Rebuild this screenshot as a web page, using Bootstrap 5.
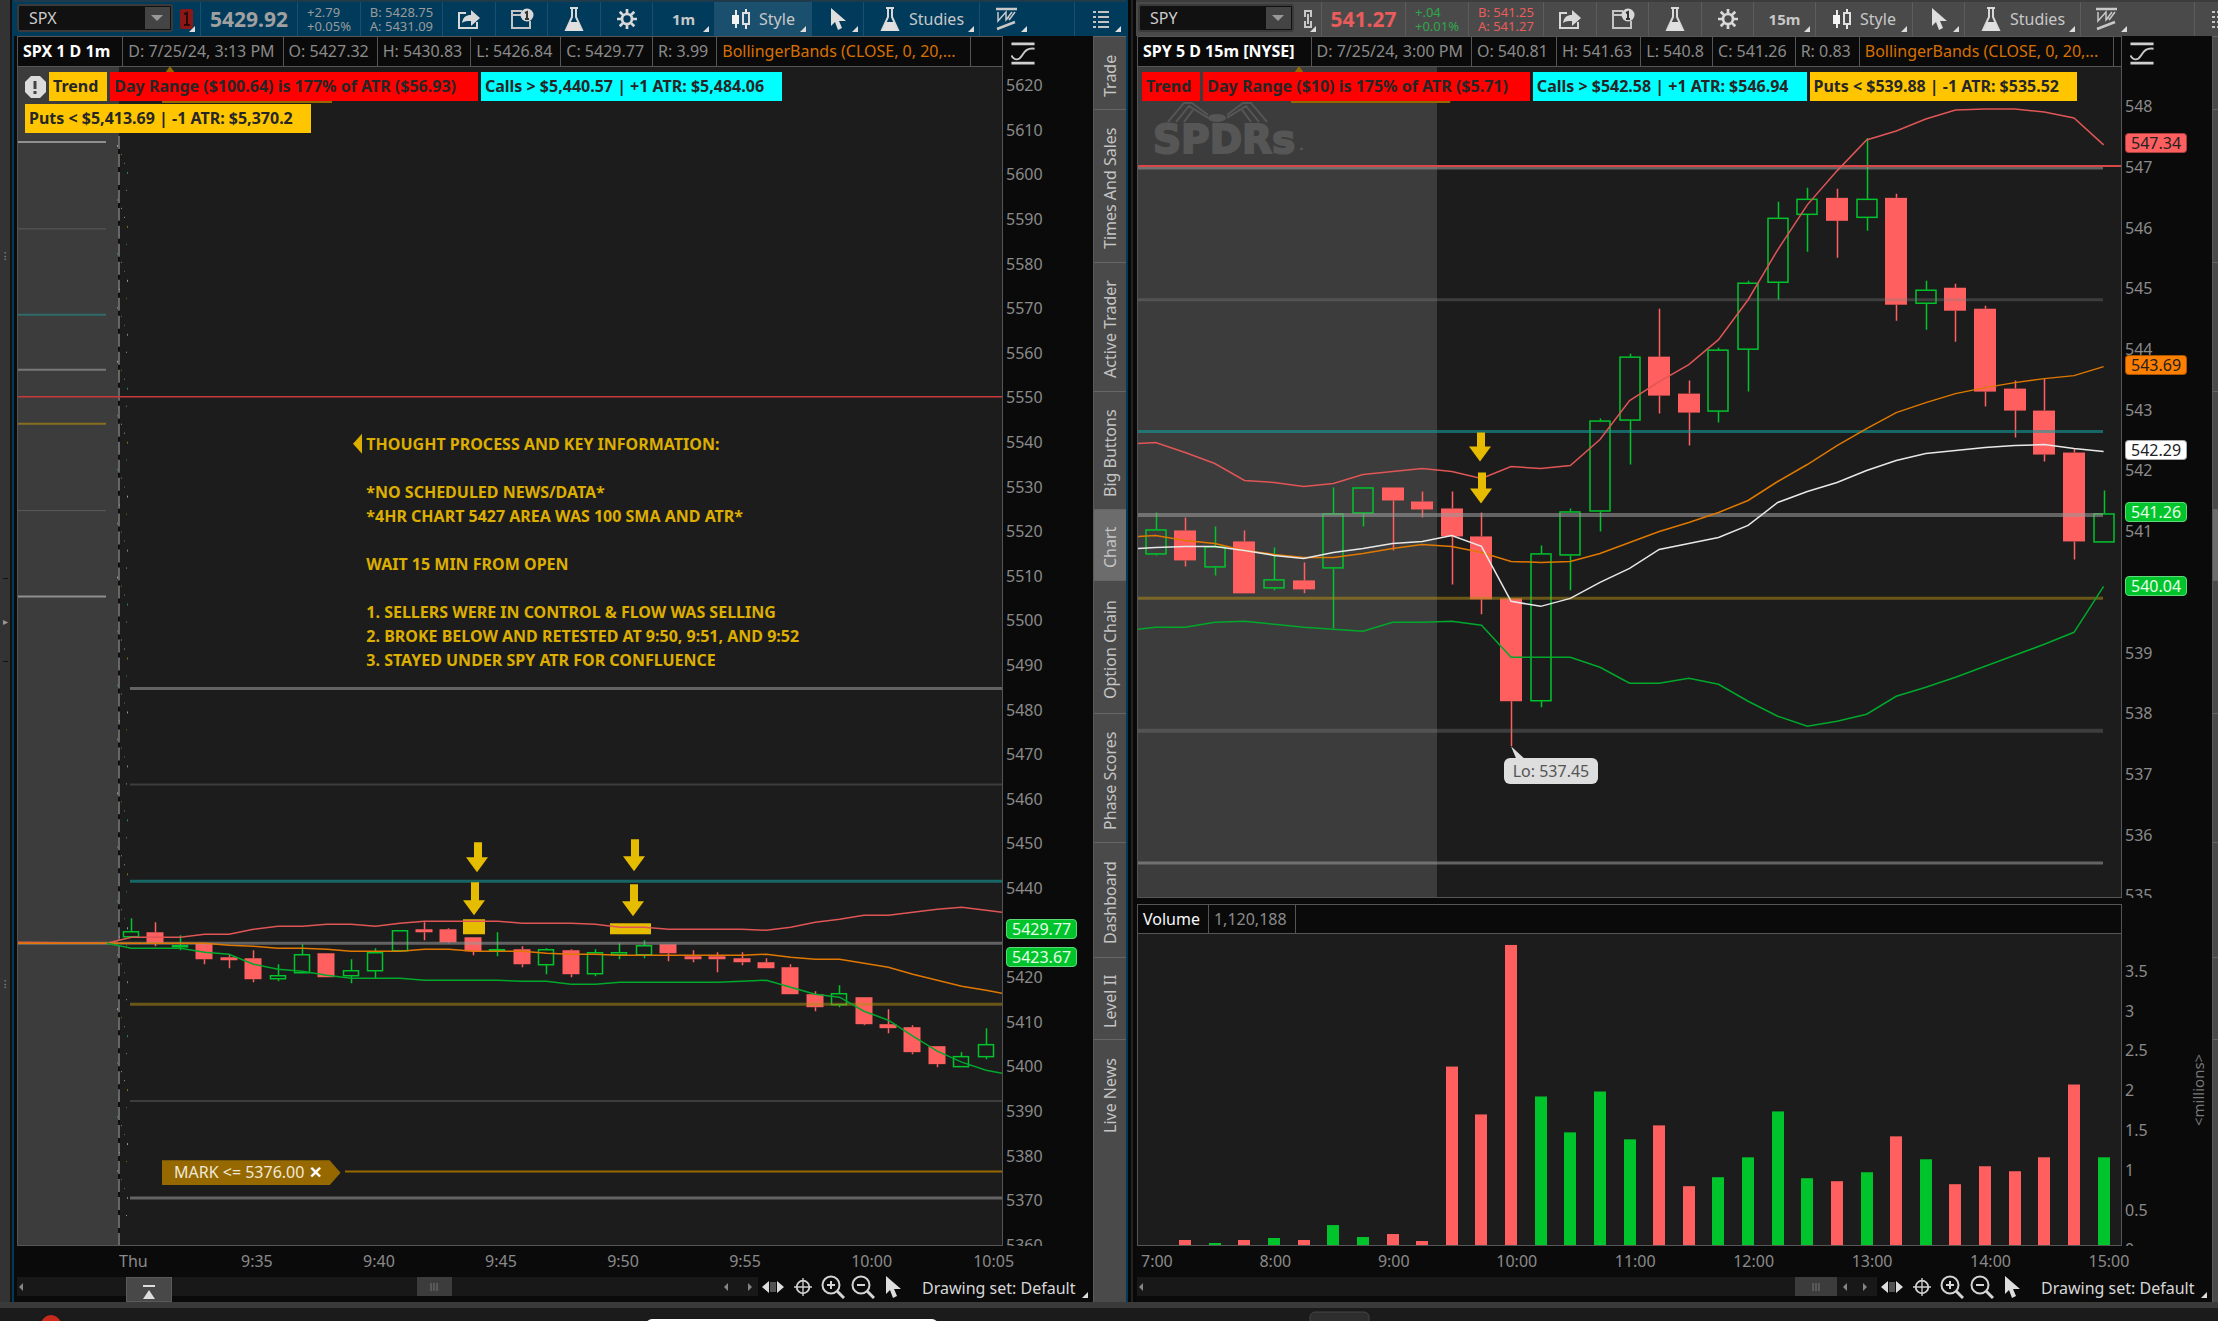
<!DOCTYPE html>
<html lang="en">
<head>
<meta charset="utf-8">
<meta name="viewport" content="width=device-width, initial-scale=1">
<title>Charts: SPX and SPY</title>
<link href="https://cdn.jsdelivr.net/npm/bootstrap@5.3.0/dist/css/bootstrap.min.css" rel="stylesheet">
<style>
:root{--line:#555;--ink:#8a8a8a;--plot:#1c1c1c;--deep:#0a0a0a}
body{font-family:"Noto Sans","Open Sans",sans-serif;font-size:16px;line-height:24px;background:#0a0a0a;color:var(--ink);overflow:hidden}
button{font:inherit;color:inherit;background:none;border:0;padding:0}
.edge{width:12px;background:#333;border-right:2px solid #111;color:#999;font-size:10px;padding-top:18.8vh;padding-bottom:23.5vh}
.edge span{height:16px;line-height:16px}
.edge .grip{border-top:1px solid #111;border-bottom:1px solid #111;height:84px;line-height:84px}
.pane-a{width:calc(50% + 7px);border-left:2px solid #003b5c;border-right:2px solid #003b5c}
.divide{width:8px;background:#222;border-left:3px solid #080808;border-right:3px solid #080808}
.bar{height:36px;background:#003b5c;color:#c8c8c8;border-top:2px solid #1f3a4a;padding-left:3px}
.pane-b .bar{background:#4a4a4a;border-top-color:#3c3c3c;padding-left:2px}
.cell{border-left:1px solid #1c4f6e;height:34px;position:relative;flex:none;display:flex;align-items:center;justify-content:center}
.pane-b .cell{border-left-color:#5c5c5c}
.cell svg{display:block}
.more::after{content:"";position:absolute;right:5px;bottom:4px;border:3px solid transparent;border-right-color:#ddd;border-bottom-color:#ddd}
.lit{background:#1a4f6e}
.combo{width:156px;height:28px;margin-top:2px;background:#111;border:2px solid #3a3a3a;border-radius:3px;position:relative}
.combo select{appearance:none;background:none;border:0;color:#ccc;width:100%;height:100%;padding:0 10px;position:relative;z-index:1}
.combo svg{position:absolute;right:0;top:0}
.pane-b .cell.w-link,.cell.w-link{width:27px;border-left:0}.w-52{width:52px}.w-53{width:53px}.w-62{width:62px}.w-chg{width:63px}.w-bid{width:82px}.w-style{width:97px}.w-stud{width:116px}.w-last{width:97px}
.pane-b .w-bid{width:75px}.pane-b .w-last{width:84px}
.last{font-size:21px;font-weight:700;color:#a0a0a0}
.tiny{font-size:13px;line-height:14px;text-align:left;color:#9a9a9a}
.last.dn,.tiny.dn{color:#e85c5c}.tiny.up{color:#2fa84a}
.period{font-size:15px;font-weight:700}
.board{flex:1 1 0;min-width:0;display:grid;grid-template-columns:1fr 90px;background:var(--deep)}
.board-a{grid-template-rows:31px minmax(0,1fr) 31px 25px;padding-left:3px}
.board-b{grid-template-rows:31px minmax(0,831fr) 6px 30px minmax(0,312fr) 31px 25px;padding-left:1px}
.wide{grid-column:1/3}
.info{border:1px solid var(--line);display:flex;overflow:hidden;white-space:nowrap;line-height:28px}
.info>span{border-right:1px solid var(--line);padding:0 8px 0 5px}
.info .ttl{color:#fff;font-weight:700;padding-right:12px}
.info .bb{color:#d87000;width:254px}
.pane-b .info .ttl{padding-right:16px}
.plot{position:relative;background:var(--plot);border-right:1px solid var(--line);border-bottom:1px solid var(--line);border-left:1px solid var(--line);overflow:hidden}
.plot>svg{position:absolute;inset:0;width:100%;height:100%}
.flags{position:relative;display:flex;flex-wrap:wrap;gap:3px;padding:5px 7px;font-weight:700;color:#262626;line-height:29px}
.flag{padding:0 18px 0 4px}
.flag.f-r{padding-right:22px}
.flag.short{padding-right:9px}
.f-y{background:#ffc600}.f-r{background:#f00}.f-c{background:#0ff}
.pane-b .flags{padding-left:4px}
.ladder{overflow:hidden;position:relative}
.ladder>span{display:flex;align-items:center;padding-left:3px}
.lad-a>span{height:3.783%}.lad-a>span:first-of-type{margin-top:-4px}
.lad-b>span{height:7.304%}.lad-b>span:first-of-type{margin-top:9px}
.lad-v{grid-row:4/6;grid-column:2}
.lad-v>span{height:11.64%}.lad-v>span:first-of-type{margin-top:47px}
.pill{position:absolute;left:3px;height:20px;line-height:18px;border-radius:4px;padding:0 5px;border:1px solid #0005;color:#222}
.pill.g{background:#00c42c;color:#e8ffe8;border-color:#5fd878}
.unit{position:absolute;right:2px;top:15px;height:100%;writing-mode:vertical-rl;transform:rotate(180deg);text-align:center;color:#777;font-size:15px}
.times{display:flex;line-height:30px}
.times span{flex:0 0 12.53%}
.board-a .times{padding-left:102px}
.board-b .times{padding-left:4px}
.board-b .times span{flex-basis:11.06%}
.track{height:19px;background:#181818;flex:1 1 0;color:#777}
.thumb{width:35px;height:19px;background:#3c3c3c}
.board-a .thumb{margin-left:33%}
.pane-b .thumb{width:42px}
.tools{width:335px;height:25px;color:#d8d8d8;position:relative}
.tools button{width:30px;height:20px;display:flex;justify-content:center;align-items:center}
.tools .set{width:auto;margin-left:14px;white-space:nowrap;padding-top:2px}
.pop{width:46px;height:25px;margin-left:101px;background:#484848;border:1px solid #5a5a5a}
.rail{width:33px;background:#4a4a4a;border-left:1px solid #5a5a5a;color:#c4c4c4;overflow:hidden}
.rail button{writing-mode:vertical-rl;transform:rotate(180deg);width:32px;border-bottom:1px solid #666;flex:none;line-height:30px;padding-bottom:5px}
.rail .on{background:#6c6c6c}
.pane-b .rail{flex:0 0 6px}
.foot{height:19px;background:#1b1b1b;border-top:6px solid #3a3a3a;position:relative;overflow:hidden}
.note{position:absolute;left:35.4%;top:31%;font-weight:700;color:#dcae00;white-space:pre;line-height:24px}
.mark-tag{position:absolute;left:144px;top:92.8%;height:25px;line-height:24px;padding:0 19px 0 12px;background:#966900;color:#f0e8d8;clip-path:polygon(0 0,calc(100% - 11px) 0,100% 50%,calc(100% - 11px) 100%,0 100%);white-space:nowrap}
.mark-tag button{font-weight:700;color:#fff}
.low{position:absolute;left:37.2%;top:83.2%;background:#dedede;color:#555;border-radius:6px;height:26px;line-height:26px;padding:0 9px}
</style>
<script src="https://cdn.jsdelivr.net/npm/bootstrap@5.3.0/dist/js/bootstrap.bundle.min.js"></script>
</head>
<body class="vh-100 d-flex flex-column">
<svg width="0" height="0" class="position-absolute" aria-hidden="true">
 <defs>
 <symbol id="share" viewBox="0 0 24 22"><path d="M9 5H2v15h18v-6" fill="none" stroke="#d8d8d8" stroke-width="2"/><path d="M5 15c1-6 4-8 9-8V2l9 8-9 8v-5c-4 0-6 0-9 2z" fill="#d8d8d8"/></symbol>
 <symbol id="alert" viewBox="0 0 24 22"><path d="M12 3H2v17h18v-7M2 7h9" fill="none" stroke="#c4c4c4" stroke-width="2"/><circle cx="17" cy="7" r="6.500" fill="#d8d8d8"/><path d="M15 5l2-1v7m-2 0h4" stroke="#333" stroke-width="2" fill="none"/></symbol>
 <symbol id="flask" viewBox="0 0 22 28"><path d="M7 3h8M9 3v9L3 25h16L13 12V3" fill="none" stroke="#d8d8d8" stroke-width="2"/><path d="M7 17h8l4 9H3z" fill="#e0e0e0"/></symbol>
 <symbol id="gear" viewBox="0 0 22 22"><circle cx="11" cy="11" r="5.500" fill="none" stroke="#d8d8d8" stroke-width="3"/><path d="M11 0v5M11 17v5M0 11h5M17 11h5M3 3l4 4M15 15l4 4M19 3l-4 4M7 15l-4 4" stroke="#d8d8d8" stroke-width="3"/></symbol>
 <symbol id="candles" viewBox="0 0 20 22"><path d="M5 2v18M15 1v4m0 12v4" stroke="#e8e8e8" stroke-width="2"/><path d="M1 7h7v9H1z" fill="#f4f4f4"/><path d="M12 5h6v11h-6z" fill="none" stroke="#e0e0e0" stroke-width="2"/></symbol>
 <symbol id="cursor" viewBox="0 0 18 22"><path d="M2 0v18l4-4 3 8 4-2-3-7h7z" fill="#dedede"/></symbol>
 <symbol id="pattern" viewBox="0 0 21 24"><path d="M0 2h21M1 22l18-7" stroke="#c8c8c8" stroke-width="2.500"/><path d="M2 5v9l8-9v8l3-3M13 13l6-8M10 13l6-8" fill="none" stroke="#c8c8c8" stroke-width="1.500"/></symbol>
 <symbol id="list" viewBox="0 0 18 18"><path d="M1 2h3m2 0h11M1 7h3m2 0h11M1 12h3m2 0h11M1 17h3m2 0h11" stroke="#c4c4c4" stroke-width="2"/></symbol>
 <symbol id="drop" viewBox="0 0 26 24"><path d="M0 1h25v22H0z" fill="#444"/><path d="M6 9h12l-6 6z" fill="#999"/></symbol>
 <symbol id="chain" viewBox="0 0 10 20"><path d="M2 8V2h6v6M2 12v6h6v-6M5 5v10" fill="none" stroke="#c8c8c8" stroke-width="2"/></symbol>
 <symbol id="fit" viewBox="0 0 24 26"><path d="M0 3h24M0 23h24" stroke="#d0d0d0" stroke-width="3"/><path d="M0 15c3 6 8 5 11 0s6-8 13-7" fill="none" stroke="#c8c8c8" stroke-width="2"/></symbol>
 <symbol id="spread" viewBox="0 0 22 14"><path d="M0 7l7-6v12zM22 7l-7-6v12z" fill="#ddd"/><path d="M9 2v10M11 2v10M13 2v10" stroke="#999"/></symbol>
 <symbol id="target" viewBox="0 0 20 20"><circle cx="10" cy="10" r="7" fill="none" stroke="#d0d0d0" stroke-width="2"/><path d="M10 0v20M0 10h20" stroke="#d0d0d0" stroke-width="1.500"/></symbol>
 <symbol id="plus" viewBox="0 0 24 24"><circle cx="10" cy="10" r="8.500" fill="none" stroke="#d4d4d4" stroke-width="2"/><path d="M16 16l7 7" stroke="#d4d4d4" stroke-width="3"/><path d="M10 6v8M6 10h8" stroke="#d4d4d4" stroke-width="2"/></symbol>
 <symbol id="minus" viewBox="0 0 24 24"><circle cx="10" cy="10" r="8.500" fill="none" stroke="#d4d4d4" stroke-width="2"/><path d="M16 16l7 7" stroke="#d4d4d4" stroke-width="3"/><path d="M6 10h8" stroke="#d4d4d4" stroke-width="2"/></symbol>
 <symbol id="tl" viewBox="0 0 8 10"><path d="M6 1v8L2 5z" fill="#858585"/></symbol>
 <symbol id="tr" viewBox="0 0 8 10"><path d="M2 1v8l4-4z" fill="#858585"/></symbol>
 <symbol id="ribs" viewBox="0 0 10 10"><path d="M2 1v8M5 1v8M8 1v8" stroke="#777"/></symbol>
 </defs>
</svg>

<div class="d-flex flex-grow-1" style="min-height:0">
 <aside class="edge d-flex flex-column align-items-center justify-content-between flex-shrink-0 text-center">
  <span>⁝</span><span class="grip">▸</span><span>⁝</span>
 </aside>

 <section class="pane-a d-flex flex-column flex-shrink-0">
  <header class="bar d-flex">
   <div class="combo flex-shrink-0"><select aria-label="Symbol SPX"><option>SPX</option></select><svg width="26" height="24"><use href="#drop"/></svg></div>
   <button class="cell w-link more" aria-label="Link 1"><svg width="13" height="20"><rect width="13" height="20" rx="2" fill="#8c1717"/><path d="M4 5l3-1v12M4 16h6" fill="none" stroke="#2a0a0a" stroke-width="2"/></svg></button>
   <span class="cell w-last last">5429.92</span>
   <span class="cell w-chg tiny">+2.79<br>+0.05%</span>
   <span class="cell w-bid tiny">B: 5428.75<br>A: 5431.09</span>
   <button class="cell w-53" aria-label="Share"><svg width="24" height="22"><use href="#share"/></svg></button>
   <button class="cell w-52" aria-label="Alert"><svg width="24" height="22"><use href="#alert"/></svg></button>
   <button class="cell w-53" aria-label="Lab"><svg width="22" height="28"><use href="#flask"/></svg></button>
   <button class="cell w-52" aria-label="Settings"><svg width="20" height="20"><use href="#gear"/></svg></button>
   <button class="cell w-62 period more">1m</button>
   <button class="cell w-style lit more"><svg width="20" height="22" class="me-2"><use href="#candles"/></svg>Style</button>
   <button class="cell w-52 more" aria-label="Cursor"><svg width="18" height="22"><use href="#cursor"/></svg></button>
   <button class="cell w-stud more"><svg width="22" height="28" class="me-2"><use href="#flask"/></svg>Studies</button>
   <button class="cell w-53 more" aria-label="Patterns"><svg width="21" height="24"><use href="#pattern"/></svg></button>
   <button class="cell w-52 more ms-auto" aria-label="Menu"><svg width="18" height="18"><use href="#list"/></svg></button>
  </header>
  <div class="d-flex flex-grow-1" style="min-height:0">
   <div class="board board-a">
    <div class="info"><span class="ttl">SPX 1 D 1m</span><span>D: 7/25/24, 3:13 PM</span><span>O: 5427.32</span><span>H: 5430.83</span><span>L: 5426.84</span><span>C: 5429.77</span><span>R: 3.99</span><span class="bb">BollingerBands (CLOSE, 0, 20,...</span></div>
    <div class="ps-2 pt-1"><svg width="24" height="25"><use href="#fit"/></svg></div>
    <div class="plot">
     <svg id="chartA" viewBox="18 67 984 1179" preserveAspectRatio="none"></svg>
     <div class="flags"><svg width="21" height="24" class="mt-1"><path d="M6 0h9l6 6v10l-6 6H6l-6-6V6z" fill="#dcdcdc"/><path d="M10 5v8m0 2v3" stroke="#444" stroke-width="3"/></svg><span class="flag short f-y">Trend</span><span class="flag f-r">Day Range ($100.64) is 177% of ATR ($56.93)</span><span class="flag f-c">Calls &gt; $5,440.57 | +1 ATR: $5,484.06</span><span class="flag f-y">Puts &lt; $5,413.69 | -1 ATR: $5,370.2</span></div>
     <div class="note">THOUGHT PROCESS AND KEY INFORMATION:

*NO SCHEDULED NEWS/DATA*
*4HR CHART 5427 AREA WAS 100 SMA AND ATR*

WAIT 15 MIN FROM OPEN

1. SELLERS WERE IN CONTROL &amp; FLOW WAS SELLING
2. BROKE BELOW AND RETESTED AT 9:50, 9:51, AND 9:52
3. STAYED UNDER SPY ATR FOR CONFLUENCE</div>
     <div class="mark-tag">MARK &lt;= 5376.00 <button aria-label="Remove">✕</button></div>
    </div>
    <div class="ladder lad-a" id="ladA"></div>
    <div class="times wide"><span>Thu</span><span>9:35</span><span>9:40</span><span>9:45</span><span>9:50</span><span>9:55</span><span>10:00</span><span>10:05</span></div>
    <div class="wide d-flex">
     <div class="track d-flex align-items-center"><svg width="8" height="10"><use href="#tl"/></svg><button class="pop align-self-start" aria-label="Expand"><svg width="14" height="18"><path d="M1 2h12v2H1zM7 7l6 9H1z" fill="#ddd"/></svg></button><div class="thumb d-flex justify-content-center align-items-center me-auto"><svg width="10" height="10"><use href="#ribs"/></svg></div><svg width="8" height="10" class="me-3"><use href="#tl"/></svg><svg width="8" height="10" class="me-1"><use href="#tr"/></svg></div>
     <div class="tools d-flex more"><button aria-label="Fit"><svg width="22" height="14"><use href="#spread"/></svg></button><button aria-label="Crosshair"><svg width="18" height="20"><use href="#target"/></svg></button><button aria-label="Zoom in"><svg width="24" height="24"><use href="#plus"/></svg></button><button aria-label="Zoom out"><svg width="24" height="24"><use href="#minus"/></svg></button><button aria-label="Pointer"><svg width="18" height="22"><use href="#cursor"/></svg></button><button class="set">Drawing set: Default</button></div>
    </div>
   </div>
   <nav class="rail d-flex flex-column flex-shrink-0"></nav>
  </div>
 </section>

 <div class="divide flex-shrink-0"></div>

 <section class="pane-b d-flex flex-column flex-grow-1 overflow-hidden">
  <header class="bar d-flex">
   <div class="combo flex-shrink-0"><select aria-label="Symbol SPY"><option>SPY</option></select><svg width="26" height="24"><use href="#drop"/></svg></div>
   <button class="cell w-link more" aria-label="Link"><svg width="10" height="20"><use href="#chain"/></svg></button>
   <span class="cell w-last last dn">541.27</span>
   <span class="cell w-chg tiny up">+.04<br>+0.01%</span>
   <span class="cell w-bid tiny dn">B: 541.25<br>A: 541.27</span>
   <button class="cell w-53" aria-label="Share"><svg width="24" height="22"><use href="#share"/></svg></button>
   <button class="cell w-52" aria-label="Alert"><svg width="24" height="22"><use href="#alert"/></svg></button>
   <button class="cell w-53" aria-label="Lab"><svg width="22" height="28"><use href="#flask"/></svg></button>
   <button class="cell w-52" aria-label="Settings"><svg width="20" height="20"><use href="#gear"/></svg></button>
   <button class="cell w-62 period more">15m</button>
   <button class="cell w-style more"><svg width="20" height="22" class="me-2"><use href="#candles"/></svg>Style</button>
   <button class="cell w-52 more" aria-label="Cursor"><svg width="18" height="22"><use href="#cursor"/></svg></button>
   <button class="cell w-stud more"><svg width="22" height="28" class="me-2"><use href="#flask"/></svg>Studies</button>
   <button class="cell w-52 more" aria-label="Patterns"><svg width="21" height="24"><use href="#pattern"/></svg></button>
   <button class="cell ms-auto overflow-hidden justify-content-start ps-3" style="width:24px" aria-label="Menu"><svg width="18" height="18" class="flex-shrink-0"><use href="#list"/></svg></button>
  </header>
  <div class="d-flex flex-grow-1" style="min-height:0">
   <div class="board board-b">
    <div class="info"><span class="ttl">SPY 5 D 15m [NYSE]</span><span>D: 7/25/24, 3:00 PM</span><span>O: 540.81</span><span>H: 541.63</span><span>L: 540.8</span><span>C: 541.26</span><span>R: 0.83</span><span class="bb">BollingerBands (CLOSE, 0, 20,...</span></div>
    <div class="ps-2 pt-1"><svg width="24" height="25"><use href="#fit"/></svg></div>
    <div class="plot">
     <svg id="chartB" viewBox="1138 67 983 831" preserveAspectRatio="none"></svg>
     <div class="flags"><span class="flag short f-r">Trend</span><span class="flag f-r">Day Range ($10) is 175% of ATR ($5.71)</span><span class="flag f-c">Calls &gt; $542.58 | +1 ATR: $546.94</span><span class="flag f-y">Puts &lt; $539.88 | -1 ATR: $535.52</span></div>
     <div class="low">Lo: 537.45</div>
    </div>
    <div class="ladder lad-b" id="ladB"></div>
    <div class="wide"></div>
    <div class="info"><span class="text-light">Volume</span><span>1,120,188</span></div>
    <div class="ladder lad-v" id="ladV"></div>
    <div class="plot"><svg id="chartV" viewBox="1138 934 983 312" preserveAspectRatio="none"></svg></div>
    <div class="times wide"><span>7:00</span><span>8:00</span><span>9:00</span><span>10:00</span><span>11:00</span><span>12:00</span><span>13:00</span><span>14:00</span><span>15:00</span></div>
    <div class="wide d-flex">
     <div class="track d-flex align-items-center"><svg width="8" height="10"><use href="#tl"/></svg><div class="thumb d-flex justify-content-center align-items-center ms-auto me-1"><svg width="10" height="10"><use href="#ribs"/></svg></div><svg width="8" height="10" class="me-2"><use href="#tl"/></svg><svg width="8" height="10" class="ms-1 me-2"><use href="#tr"/></svg></div>
     <div class="tools d-flex more"><button aria-label="Fit"><svg width="22" height="14"><use href="#spread"/></svg></button><button aria-label="Crosshair"><svg width="18" height="20"><use href="#target"/></svg></button><button aria-label="Zoom in"><svg width="24" height="24"><use href="#plus"/></svg></button><button aria-label="Zoom out"><svg width="24" height="24"><use href="#minus"/></svg></button><button aria-label="Pointer"><svg width="18" height="22"><use href="#cursor"/></svg></button><button class="set">Drawing set: Default</button></div>
    </div>
   </div>
   <nav class="rail d-flex flex-column"></nav>
  </div>
 </section>
</div>
<footer class="foot flex-shrink-0">
 <svg width="100%" height="13" class="d-block"><circle cx="51" cy="17" r="10" fill="#c92a1c"/><rect x="646" y="11" width="292" height="20" rx="6" fill="#fff"/><rect x="1310" y="4" width="59" height="20" rx="5" fill="#2e2e2e" stroke="#444"/></svg>
</footer>

<script>
const RED='#ff5f5f',GRN='#00c42c';
const rect=(x,y,w,h,f,e='')=>`<rect x="${x}" y="${y}" width="${w}" height="${h}" fill="${f}" ${e}/>`;
const hline=(x1,x2,y,c,w)=>`<path d="M${x1} ${y}H${x2}" stroke="${c}" stroke-width="${w}"/>`;
// candle rows: colour, high, body top, body bottom, low
const candles=(rows,x0,dx,w)=>rows.map(([c,h,t,b,l],i)=>{
  const x=Math.round(x0+dx*i), s=c=='r'?RED:GRN;
  const wick=`<path d="M${x+.5} ${h}V${t}M${x+.5} ${b}V${l}" stroke="${s}" stroke-width="1.5"/>`;
  return wick+(c=='r'?rect(x-w/2,t,w,Math.max(b-t,3),s):rect(x-w/2+1,t+.5,w-2,Math.max(b-t-1,1),'none',`stroke="${s}" stroke-width="1.500"`));
}).join('');
const curve=(first,ys,x0,dx,c,last='')=>`<polyline fill="none" stroke="${c}" stroke-width="1.500" points="${first} ${ys.map((y,i)=>(x0+dx*i).toFixed(1)+','+y).join(' ')} ${last}"/>`;
const arrow=(x,y,tip)=>`<path d="M${x-4} ${y}h8V${tip-15}h6L${x-1} ${tip}L${x-12} ${tip-15}h8z" fill="#e6bc00"/>`;
const grayB='#9a9a9a90',grayS='#80808055';

const A=[['g',919,932,938,938],['r',923,933,944,947],['g',936,946,947,951],['r',944,944,960,965],['r',955,958,960,969],['r',951,959,980,983],['g',965,976,980,982],['g',945,955,974,974],['r',954,954,978,978],['g',960,971,977,984],['g',949,953,972,979],['g',931,931,952,952],['r',923,930,933,941],['r',929,930,943,944],['r',938,938,952,956],['g',933,950,952,957],['r',947,950,965,968],['g',949,950,966,975],['r',950,951,975,978],['g',950,953,975,977],['g',944,953,956,960],['g',941,946,956,959],['r',945,945,954,962],['r',951,957,960,963],['r',953,957,960,973],['r',953,959,963,966],['r',959,963,969,969],['r',965,968,995,995],['r',992,995,1008,1012],['g',986,994,1006,1008],['r',998,998,1025,1026],['r',1010,1025,1029,1034],['r',1026,1028,1053,1055],['r',1047,1047,1065,1068],['g',1053,1057,1068,1068],['g',1029,1045,1058,1060]];
const aUp=[938,938,938,935,935,930,927,927,925,925,927,924,922,922,922,922,924,924,924,925,928,928,930,930,930,930,931,928,923,920,916,916,913,910,908,911];
const aMid=[944,944,944,944,946,947,949,949,950,952,952,952,950,950,952,952,952,954,955,955,956,956,956,956,956,956,955,958,960,960,964,968,975,981,987,991];
const aLow=[949,949,949,953,955,965,970,972,976,979,979,979,981,981,981,981,982,982,985,985,983,983,983,983,983,982,981,988,995,998,1012,1021,1037,1052,1063,1071];
let dots='';
for(let i=0;i<120;i++){const y=145+i*9;const x=[117,121,124,127,119,126][i%6];dots+=rect(x,y,1,i%3?1:2,['#999','#666','#808080','#2c7c7c','#777','#8a6d10'][(i*5+(i>>2))%6]);}
document.getElementById('chartA').innerHTML=
 rect(17,67,102,1179,'#3c3c3c')+`<path d="M119 136V1246" stroke="#0f0f0f" stroke-width="2"/><path d="M119 136V1246" stroke="#666" stroke-width="2" stroke-dasharray="13 5"/>`+dots+
 '<path d="M165 73l5-7 5 7zM162 80h170v23H162z" fill="#966900"/>'+
 hline(17,106,142,'#909090',2)+hline(17,106,229,'#5a5a5a',1)+hline(17,106,315,'#2f6a6a',2)+hline(17,106,370,'#777',2)+hline(17,106,424,'#86701f',2)+hline(17,106,511,'#5a5a5a',1)+hline(17,106,597,'#909090',2)+
 candles(A,131,24.42,17)+
 rect(463,920,22,15,'#e6bc00')+rect(610,924,41,11,'#e6bc00')+
 hline(17,1002,397,'#c83a3a',1.5)+hline(130,1002,689,grayB,3)+hline(130,1002,785,grayS,2)+hline(130,1002,882,'#159a9a99',3)+hline(17,1002,944,grayB,3)+hline(130,1002,1005,'#b08c1488',3)+hline(130,1002,1102,grayS,2)+hline(345,1002,1172.5,'#966900',2)+hline(130,1002,1199,grayB,3)+
 curve('17,943 107,944',aUp,131.4,24.42,'#e05555','1002,913')+curve('17,944',aMid,131.4,24.42,'#e07800','1002,994')+curve('107,944',aLow,131.4,24.42,'#00a82c','1002,1074')+
 arrow(478,843,873)+arrow(475,883,916)+arrow(635,840,872)+arrow(634,885,917)+
 '<path d="M353 444l9-10v20z" fill="#dcae00"/>';

const B=[['g',513,530,555,556],['r',518,531,561,567],['g',527,547,568,576],['r',531,542,594,594],['g',548,580,589,591],['r',563,581,590,594],['g',488,514,569,629],['g',488,488,514,527],['r',488,488,501,551],['r',492,502,510,518],['r',492,509,537,585],['r',513,537,600,615],['r',599,599,702,747],['g',546,554,702,708],['g',509,512,556,591],['g',419,421,512,532],['g',354,357,421,465],['r',309,357,396,414],['r',381,394,413,446],['g',348,350,412,423],['g',281,283,350,392],['g',202,218,283,300],['g',188,199,215,252],['r',189,198,221,258],['g',138,199,218,231],['r',194,198,305,321],['g',281,290,304,330],['r',284,288,311,342],['r',306,309,392,407],['r',381,389,411,438],['r',379,411,455,462],['r',449,453,542,560],['g',491,514,543,543]];
const bUp=[443,453,464,481,483,487,484,475,472,469,472,479,467,469,466,440,401,382,365,340,300,250,205,171,140,131,119,110,109,109,112,118,145];
const bMid=[536,541,544,551,555,558,558,554,549,545,547,553,562,563,562,554,543,532,523,513,501,482,465,446,429,413,403,394,388,383,379,376,367];
const bWht=[548,547,547,551,556,559,553,549,544,542,536,547,602,607,599,583,569,550,544,538,526,503,492,483,471,461,454,451,448,446,445,449,452];
const bLow=[628,628,623,622,625,628,630,632,623,623,622,626,658,658,658,668,684,684,679,685,702,717,727,722,715,697,688,678,667,656,645,633,587];
document.getElementById('chartB').innerHTML=
 rect(1138,67,299,831,'#3c3c3c')+
 '<path d="M1294 73l5-7 5 7zM1291 80h165l-6 23h-159z" fill="#966900"/>'+
 '<text x="1153" y="153" font-family="DejaVu Sans" font-weight="700" font-size="39" fill="#565656" stroke="#565656" stroke-width="2">SPDRs</text><rect x="1300" y="148" width="3" height="2" fill="#565656"/><ellipse cx="1217" cy="118" rx="9" ry="4" fill="#565656"/><path d="M1168 122l16-19h8l16 12M1176 122l13-16 19 12M1184 122l9-12M1267 122l-16-19h-8l-16 12M1259 122l-13-16-19 12M1251 122l-9-12" fill="none" stroke="#565656" stroke-width="2"/>'+
 candles(B,1155.6,29.625,22)+
 hline(1138,2103,168,grayB,3)+hline(1138,2121,166,'#d84848',2)+hline(1138,2103,300,grayS,3)+hline(1138,2103,432,'#159a9a99',3)+hline(1138,2103,515.5,grayB,4)+hline(1138,2103,599,'#b08c1488',3)+hline(1138,2103,731.5,grayS,4)+hline(1138,2103,864,grayB,3)+
 curve('1138,444',bUp,1155.6,29.625,'#e05555')+curve('1138,537',bMid,1155.6,29.625,'#e07800')+curve('1138,549',bWht,1155.6,29.625,'#e8e8e8')+curve('1138,630',bLow,1155.6,29.625,'#00a82c')+
 arrow(1481,433,462)+arrow(1482,473,504)+'<path d="M1511 747l13 12h-8z" fill="#dedede"/>';

const V=['r1241','g1244','r1241','g1239','r1241','g1226','g1238','r1235','r1242','r1067','r1115','r945','g1097','g1133','g1092','g1140','r1126','r1187','g1178','g1158','g1112','g1179','r1182','g1173','r1137','g1160','r1185','r1167','r1172','r1158','r1085','g1158'];
document.getElementById('chartV').innerHTML=V.map((v,i)=>rect(Math.round(1155.6+29.625*(i+1))-6,+v.slice(1),12,1246-v.slice(1),v[0]=='r'?RED:GRN)).join('');

const ladder=(id,vals,extra)=>document.getElementById(id).innerHTML=vals.map(v=>`<span>${v}</span>`).join('')+extra;
const pill=(top,v,style,cls='')=>`<b class="pill fw-normal ${cls}" style="top:${top}%;${style}">${v}</b>`;
ladder('ladA',Array.from({length:27},(_,i)=>i==19?'':5620-10*i),pill(72.3,'5429.77','','g')+pill(74.6,'5423.67','','g'));
ladder('ladB',Array.from({length:14},(_,i)=>i==8?'':548-i),pill(7.9,'547.34','background:#ff5f5f')+pill(34.6,'543.69','background:#ff7f00')+pill(44.9,'542.29','background:#fff')+pill(52.3,'541.26','','g')+pill(61.3,'540.04','','g'));
ladder('ladV',['3.5','3','2.5','2','1.5','1','0.5','0'],'<b class="unit fw-normal">&lt;millions&gt;</b>');

const tabs=[['Trade',73],['Times And Sales',153],['Active Trader',129],['Big Buttons',118],['Chart',71],['Option Chain',133],['Phase Scores',129],['Dashboard',115],['Level II',82],['Live News',107]];
document.querySelectorAll('.rail').forEach(r=>r.innerHTML=tabs.map(([t,h])=>`<button class="${t=='Chart'?'on':''}" style="height:${h}px">${t}</button>`).join(''));
</script>
</body>
</html>
